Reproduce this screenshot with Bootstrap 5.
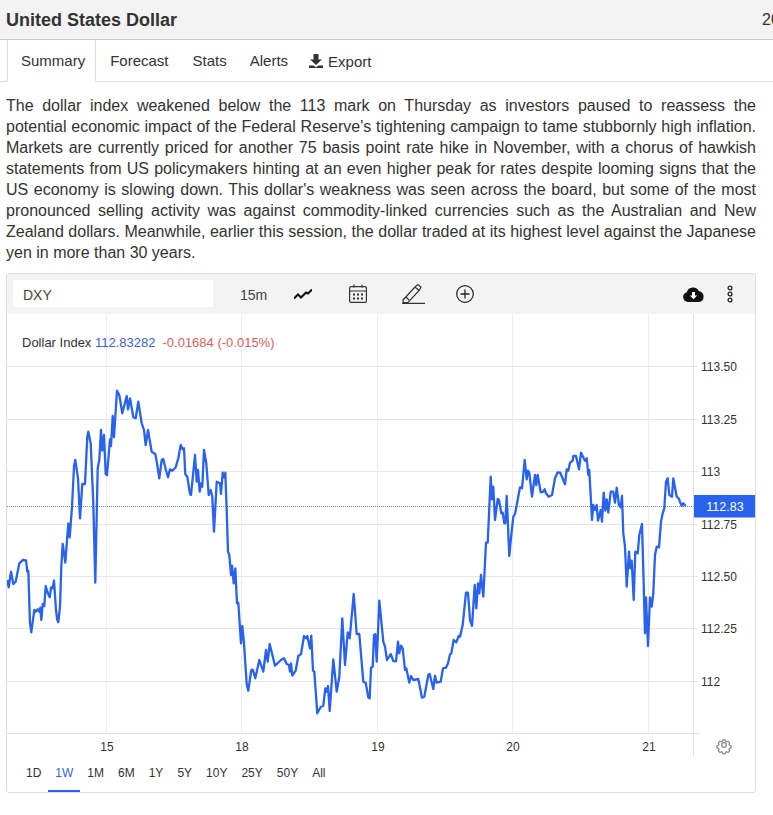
<!DOCTYPE html>
<html lang="en">
<head>
    <meta charset="UTF-8">
    <meta name="viewport" content="width=device-width, initial-scale=1.0">
    <title>United States Dollar</title>
    <link href="https://cdn.jsdelivr.net/npm/bootstrap@5.3.0/dist/css/bootstrap.min.css" rel="stylesheet">
    <style>
        body { font-family: "Liberation Sans", Arial, sans-serif; color: #333; overflow-x: hidden; background: #fff; }
        .quote-head { height: 40px; background: #f3f3f3; border-bottom: 1px solid #ccc; padding: 0 6px; overflow: hidden; white-space: nowrap; }
        .quote-title { font-size: 18px; font-weight: 700; margin: 0; color: #333; line-height: 38px; }
        .quote-date { font-size: 16px; margin-right: -12.8px; }
        .quote-tabs { height: 42px; padding-left: 7px; border-bottom: 1px solid #ddd; font-size: 15px; flex-wrap: nowrap; }
        .quote-tabs .nav-link { color: #333; padding: 0 11.5px; line-height: 41px; height: 42px; border: 0; border-radius: 0; margin: 0; }
        .quote-tabs .nav-link.active { border: 1px solid #ddd; border-top: 0; border-bottom: 1px solid #fff; padding: 0 10px 0 13px; margin-right: 2.5px; color: #333; }
        .quote-tabs .nav-item:nth-child(2) .nav-link { padding-right: 12.5px; }
        .quote-tabs .export-link { padding-left: 9.5px; padding-right: 0; display: flex; align-items: center; gap: 5px; }
        .quote-text { font-size: 16px; line-height: 21.05px; margin: 13px 17px 0 6px; text-align: justify; height: 178px; }
        .chart-card { margin: 0 17px 0 6px; height: 520px; border: 1px solid #ddd; border-radius: 3px; overflow: hidden; }
        .chart-bar { height: 40px; background: #f3f3f3; padding-left: 6px; }
        .chart-symbol { width: 200px; height: 27px; background: #fff; font-size: 14px; line-height: 31px; padding-left: 10px; color: #444; margin-top: -1px; }
        .chart-interval { font-size: 14px; color: #444; width: 81px; padding-left: 27px; padding-top: 2px; }
        .chart-svg { display: block; }
        .chart-svg text { font-family: "Liberation Sans", Arial, sans-serif; font-size: 12px; fill: #333; }
        .chart-svg .legend-text { font-size: 13px; }
        .chart-svg .legend-blue { fill: #3d5fd6; }
        .chart-svg .legend-red { fill: #d9605c; }
        .chart-svg .price-tag { fill: #fff; font-size: 12.5px; }
        .range-row { height: 35px; padding-left: 12px; font-size: 12px; }
        .range-item { padding: 0 7px; color: #333; line-height: 32px; height: 35px; text-decoration: none; border-bottom: 2px solid transparent; }
        .range-item.active { color: #3d5fd6; border-bottom-color: #2962ef; }
    </style>
</head>
<body>
    <div class="quote-head d-flex align-items-center justify-content-between">
        <h1 class="quote-title">United States Dollar</h1>
        <span class="quote-date">20</span>
    </div>

    <ul class="nav quote-tabs">
        <li class="nav-item"><a class="nav-link active" href="#">Summary</a></li>
        <li class="nav-item"><a class="nav-link" href="#">Forecast</a></li>
        <li class="nav-item"><a class="nav-link" href="#">Stats</a></li>
        <li class="nav-item"><a class="nav-link" href="#">Alerts</a></li>
        <li class="nav-item">
            <a class="nav-link export-link" href="#">
                <svg width="14" height="14" viewBox="0 0 14 14"><path fill="#333" d="M4.5 0h5v5.5H13L7 11 1 5.5h3.5zM0 11.5h4.5L7 13.2l2.5-1.7H14V14H0z"/></svg>
                Export
            </a>
        </li>
    </ul>

    <p class="quote-text">The dollar index weakened below the 113 mark on Thursday as investors paused to reassess the potential economic impact of the Federal Reserve's tightening campaign to tame stubbornly high inflation. Markets are currently priced for another 75 basis point rate hike in November, with a chorus of hawkish statements from US policymakers hinting at an even higher peak for rates despite looming signs that the US economy is slowing down. This dollar's weakness was seen across the board, but some of the most pronounced selling activity was against commodity-linked currencies such as the Australian and New Zealand dollars. Meanwhile, earlier this session, the dollar traded at its highest level against the Japanese yen in more than 30 years.</p>

    <div class="chart-card">
        <div class="chart-bar d-flex align-items-center">
            <div class="chart-symbol">DXY</div>
            <div class="chart-interval">15m</div>
            <svg width="18" height="12" viewBox="0 0 18 12" class="flex-shrink-0"><path fill="none" stroke="#111" stroke-width="2" d="M0 10.5l4-4 3 3 5-5 2 1 4-4"/></svg>
            <svg width="18" height="20" viewBox="0 0 18 20" class="flex-shrink-0" style="margin-left:37px"><g fill="none" stroke="#333" stroke-width="1.2"><rect x=".6" y="2.6" width="16.8" height="15.8" rx="1.5"/><path d="M.6 7h16.8M5 .5v3M13 .5v3"/></g><g fill="#333"><rect x="4" y="9.5" width="2" height="2"/><rect x="8" y="9.5" width="2" height="2"/><rect x="12" y="9.5" width="2" height="2"/><rect x="4" y="13.5" width="2" height="2"/><rect x="8" y="13.5" width="2" height="2"/><rect x="12" y="13.5" width="2" height="2"/></g></svg>
            <svg width="24" height="20" viewBox="0 0 24 20" class="flex-shrink-0" style="margin-left:35px"><g fill="none" stroke="#333" stroke-width="1.2"><path d="M1 16L13 3l3-2.4 3 2.6-1.8 3.2L6 18.5H1.2zM13 3l4.5 4M4 13l3 3"/><path d="M0 19.4h23"/></g></svg>
            <svg width="18" height="18" viewBox="0 0 18 18" class="flex-shrink-0" style="margin-left:30px"><circle cx="9" cy="9" r="8.3" fill="none" stroke="#222" stroke-width="1.2"/><path d="M9 4.5v9M4.5 9h9" stroke="#222" stroke-width="1.3"/></svg>
            <svg width="21" height="15" viewBox="0 0 21 15" class="flex-shrink-0 ms-auto"><path fill="#111" d="M5 15a5 5 0 0 1-1.2-9.8A6.5 6.5 0 0 1 16 4.3 5.4 5.4 0 0 1 15.8 15z"/><path fill="#fff" d="M9 5h3v3.5h2.2l-3.7 3.8-3.7-3.8H9z"/></svg>
            <svg width="6" height="18" viewBox="0 0 6 18" class="flex-shrink-0" style="margin-left:23px;margin-right:22px"><g fill="none" stroke="#222" stroke-width="1.3"><circle cx="3" cy="3" r="1.9"/><circle cx="3" cy="9" r="1.9"/><circle cx="3" cy="15" r="1.9"/></g></svg>
        </div>

        <svg id="chart" class="chart-svg" width="748" height="443" viewBox="7 314 748 443">
            <g id="grid" stroke-width="1"></g>
            <line x1="693.5" y1="314" x2="693.5" y2="757" stroke="#e3e3e3"/>
            <line x1="7" y1="733.5" x2="700" y2="733.5" stroke="#e3e3e3"/>
            <line x1="7" y1="506.5" x2="693" y2="506.5" stroke="#6f8bb0" stroke-dasharray="1 1"/>
            <polyline id="priceLine" fill="none" stroke="#2962ef" stroke-width="2.3" stroke-linejoin="round"/>
            <text class="legend-text" x="22" y="346.5">Dollar Index <tspan class="legend-blue">112.83282</tspan><tspan class="legend-red" dx="7">-0.01684 (-0.015%)</tspan></text>
            <g id="yLabels"></g>
            <g id="xLabels"></g>
            <rect x="694" y="495" width="61" height="22.5" fill="#2962ef"/>
            <text class="price-tag" x="725" y="511" text-anchor="middle">112.83</text>
            <g transform="translate(724 745) scale(.82)" fill="none" stroke="#8a8a8a" stroke-width="1.5">
                <circle r="2.8"/>
                <path d="M-1.4-6.3h2.8l.4 1.7 1.5.7 1.6-.8 2 2-.8 1.6.7 1.5 1.7.4v2.8l-1.7.4-.7 1.5.8 1.6-2 2-1.6-.8-1.5.7-.4 1.7h-2.8l-.4-1.7-1.5-.7-1.6.8-2-2 .8-1.6-.7-1.5-1.7-.4v-2.8l1.7-.4.7-1.5-.8-1.6 2-2 1.6.8 1.5-.7z"/>
            </g>
        </svg>

        <div class="range-row d-flex">
            <a class="range-item" href="#">1D</a>
            <a class="range-item active" href="#">1W</a>
            <a class="range-item" href="#">1M</a>
            <a class="range-item" href="#">6M</a>
            <a class="range-item" href="#">1Y</a>
            <a class="range-item" href="#">5Y</a>
            <a class="range-item" href="#">10Y</a>
            <a class="range-item" href="#">25Y</a>
            <a class="range-item" href="#">50Y</a>
            <a class="range-item" href="#">All</a>
        </div>
    </div>

    <script src="https://cdn.jsdelivr.net/npm/bootstrap@5.3.0/dist/js/bootstrap.bundle.min.js"></script>
    <script>
        // Price points read off the chart, in three stretches
        const seg1 = [22,600,26,622,33,575,40,612,47,605,58,550,68,540,78,541,82,575,85,572,90,730,94,757,103,690,107,695,113,688,118,695,121,683,124,720,128,672,133,678,137,618,142,635,149,652,153,622,158,625,162,602,168,690,172,720,175,727,180,680,184,560,188,492,196,548,205,430,209,472,216,380,222,260,226,240,234,295,240,415,247,312,255,312,262,170,265,155,272,190,280,370,286,608,293,265,298,240,303,150,307,212,312,165,317,282,321,285,330,178,333,198,338,108,342,172,351,32,358,45,367,100,380,48,384,88,390,55,400,112,407,115,415,65,425,130,432,150,437,195,444,150,455,215,466,222,472,255,478,295,485,240,490,237,497,268,504,292,510,268,517,272,527,262,535,235,542,195,548,208,552,205,556,283,562,290,570,342,573,345,585,225,590,305,594,270,599,335,603,310,607,320,612,210,619,250,626,345,632,330,637,350,642,455,650,305,660,310,663,342,668,278,672,292,676,278];
        const seg2 = [20,30,24,155,28,165,33,225,36,197,41,250,46,205,51,310,55,308,63,430,67,378,72,430,80,552,85,572,94,510,99,510,106,535,118,480,130,515,138,450,143,485,149,432,165,497,183,480,192,475,200,492,207,495,210,515,213,490,217,527,227,512,235,468,243,462,252,408,258,415,262,408,270,445,274,407,279,512,283,515,292,640,297,630,303,620,310,617,316,565,320,575,324,558,329,633,340,478,350,575,358,530,367,355,375,495,383,397,389,415,401,282,410,402,418,402,430,545,437,548,445,592,449,595,453,503,458,500,462,405,466,403,470,485,478,302,490,425,495,440,501,480,512,462,520,483,528,484,534,425,538,460,543,437,548,445,555,510,559,505,568,548,573,528,580,540,595,537,606,593,613,590,625,525,629,522,640,567,645,527,650,548,662,545,669,505,678,503,684,490,690,463,694,460,701,420,709,427,716,408];
        const seg3 = [0,590,8,555,18,458,24,458,30,540,36,558,44,435,49,505,54,430,58,460,63,405,70,470,78,308,83,308,92,110,96,178,100,140,105,240,113,177,117,180,124,220,128,218,133,250,136,250,140,168,148,348,154,285,160,230,165,222,172,185,180,142,186,145,194,60,200,118,204,92,208,98,216,170,225,105,229,135,233,105,242,157,250,155,254,148,258,160,266,170,276,165,285,115,293,97,301,98,315,133,320,88,325,92,330,68,338,62,340,48,348,48,357,88,363,38,375,62,380,55,385,105,388,90,396,240,400,195,405,210,410,195,414,242,422,210,426,245,431,158,436,212,440,178,445,218,452,155,460,155,465,188,470,143,477,195,482,202,486,168,490,280,495,320,500,440,507,335,511,385,515,362,521,480,526,335,533,340,538,285,546,252,550,390,555,580,558,472,564,618,570,472,575,500,580,460,585,345,590,320,597,322,603,245,608,220,613,205,618,125,623,115,628,165,636,170,640,115,650,170,656,175,665,198,670,190,677,198];

        function toPage(seg, ox, oy) {
            const out = [];
            for (let i = 0; i < seg.length; i += 2) {
                out.push((ox + seg[i] / 3).toFixed(1) + "," + (oy + seg[i + 1] / 3).toFixed(1));
            }
            return out;
        }

        const points = [...toPage(seg1, 0, 380), ...toPage(seg2, 220, 500), ...toPage(seg3, 460, 440)];
        document.getElementById("priceLine").setAttribute("points", points.join(" "));

        const svgNS = "http://www.w3.org/2000/svg";
        const grid = document.getElementById("grid");
        function addLine(x1, y1, x2, y2, color) {
            const l = document.createElementNS(svgNS, "line");
            l.setAttribute("x1", x1); l.setAttribute("y1", y1);
            l.setAttribute("x2", x2); l.setAttribute("y2", y2);
            l.setAttribute("stroke", color);
            grid.appendChild(l);
        }
        function addText(parent, x, y, str, anchor) {
            const t = document.createElementNS(svgNS, "text");
            t.setAttribute("x", x); t.setAttribute("y", y);
            if (anchor) t.setAttribute("text-anchor", anchor);
            t.textContent = str;
            parent.appendChild(t);
        }

        [[366.5, "113.50"], [419.5, "113.25"], [471.5, "113"], [524.5, "112.75"], [576.5, "112.50"], [628.5, "112.25"], [681.5, "112"]].forEach(([y, label]) => {
            addLine(7, y, 698, y, "#e6e6e6");
            addText(document.getElementById("yLabels"), 701, y + 4.5, label);
        });
        [[106.5, "15"], [241.5, "18"], [377.5, "19"], [512.5, "20"], [648.5, "21"]].forEach(([x, label]) => {
            addLine(x, 314, x, 733, "#e9eef3");
            addText(document.getElementById("xLabels"), x + 0.5, 751, label, "middle");
        });
    </script>
</body>
</html>
